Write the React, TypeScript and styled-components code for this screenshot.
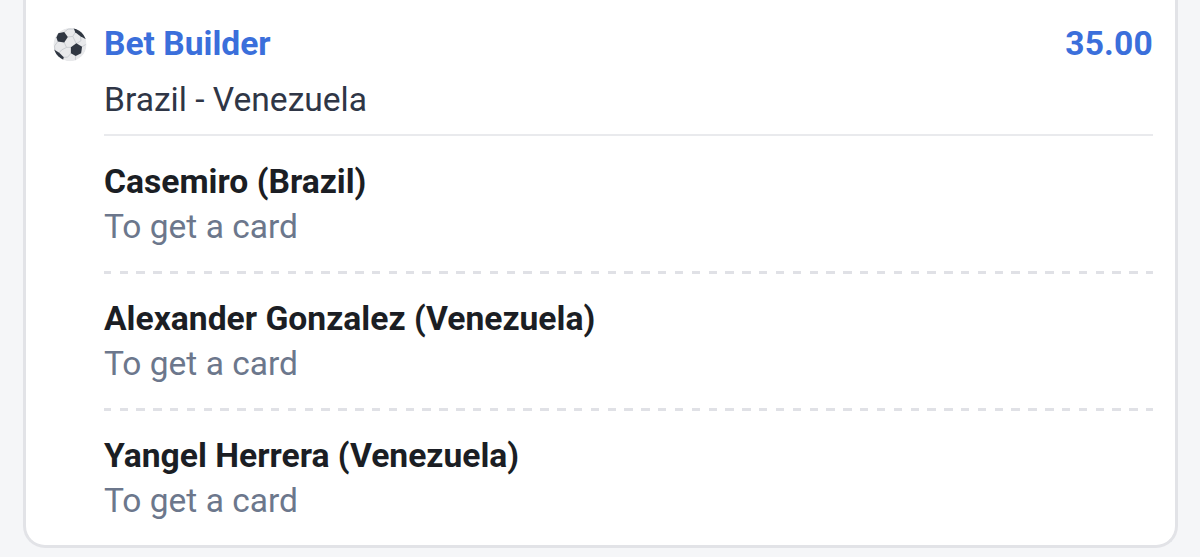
import styled, { createGlobalStyle } from "styled-components";

const GlobalStyle = createGlobalStyle`
  * {
    box-sizing: border-box;
  }

  body {
    margin: 0;
    background-color: #f5f6f8;
    font-family: Roboto, sans-serif;
    overflow: hidden;
  }
`;

const Page = styled.main`
  width: 1200px;
  height: 557px;
  padding: 0 22px 9px 23px;
`;

const BetCard = styled.section`
  height: 548px;
  padding: 22px 22px 0 26px;
  border: 3px solid #e2e3e7;
  border-top: none;
  border-radius: 0 0 22px 22px;
  background-color: #ffffff;
  display: grid;
  grid-template-columns: 52px 1fr;
  align-items: start;
`;

const BallIcon = styled.svg`
  width: 36px;
  height: 36px;
  margin-top: 5px;
`;

const BetHeader = styled.header`
  height: 114px;
  border-bottom: 2px solid #e9eaed;
`;

const TitleRow = styled.div`
  display: flex;
  justify-content: space-between;
  font-size: 33.6px;
  line-height: 44px;
  font-weight: 700;
  color: #3b6fdb;
`;

const Odds = styled.span`
  letter-spacing: 0.2px;
`;

const Match = styled.div`
  margin-top: 12px;
  font-size: 33.6px;
  line-height: 44px;
  color: #2f3646;
`;

const Selection = styled.article`
  height: 137.4px;
  padding-top: 23.6px;
`;

const Player = styled.div`
  font-size: 33.65px;
  line-height: 44px;
  font-weight: 700;
  color: #1b1e24;
`;

const Market = styled.div`
  font-size: 33.5px;
  line-height: 46px;
  color: #6c778c;
`;

const Divider = styled.div`
  height: 3px;
  margin-top: 21px;
  background: repeating-linear-gradient(
    to right,
    #e0e1e6 0 7.1px,
    transparent 7.1px 15.5px,
    #e0e1e6 15.5px 16.83px
  );
`;

const selections = [
  { player: "Casemiro (Brazil)", market: "To get a card" },
  { player: "Alexander Gonzalez (Venezuela)", market: "To get a card" },
  { player: "Yangel Herrera (Venezuela)", market: "To get a card" },
];

const FootballIcon = () => (
  <BallIcon viewBox="0 0 36 36" aria-hidden="true">
    <defs>
      <clipPath id="ball">
        <circle cx="18" cy="17.6" r="16.6" />
      </clipPath>
    </defs>
    <g clipPath="url(#ball)">
      <circle cx="18" cy="17.6" r="16.6" fill="#e8e9eb" />
      <g fill="none" stroke="#c3c6cb" strokeWidth="0.8">
        <path d="M12 5.3l4-3.2 6-.1M15.3 10l5.5-.6 2.7-4.4M12 15l2.5 5.4 4.8-.1M14.5 20.4l-5 2.6-2.5 3M6 14.3l-3.5 4.7L3 23.7M19.3 26l-3.8 4.2-4.2.1M24.3 16.7l4.7-3-.5-4.7M20.8 9.4l3.5 7.3M29.7 20l4-2.5M23.7 28.7l-.4 5" />
      </g>
      <g fill="#303742">
        <path d="M4.4 10.5l1.9-4.3L12.2 5l3.6 5-3.6 5.4-6.4-.8z" />
        <path d="M18.9 20.2l5.4-3.9 5.8 3.5-1 6.5-5.4 2.8-4.8-2.8z" />
        <path d="M21.6 1l7 1.5 5 5.5.3 4.2-5.5-2.9-5.2-4z" />
        <path d="M2 22.6l5.2 3.1 4.6 4.6-.8 2.7L4 31z" />
      </g>
    </g>
  </BallIcon>
);

export default function App() {
  return (
    <>
      <GlobalStyle />
      <Page>
        <BetCard>
          <FootballIcon />
          <div>
            <BetHeader>
              <TitleRow>
                <span>Bet Builder</span>
                <Odds>35.00</Odds>
              </TitleRow>
              <Match>Brazil - Venezuela</Match>
            </BetHeader>
            {selections.map(({ player, market }, index) => (
              <Selection key={player}>
                <Player>{player}</Player>
                <Market>{market}</Market>
                {index < selections.length - 1 && <Divider />}
              </Selection>
            ))}
          </div>
        </BetCard>
      </Page>
    </>
  );
}
